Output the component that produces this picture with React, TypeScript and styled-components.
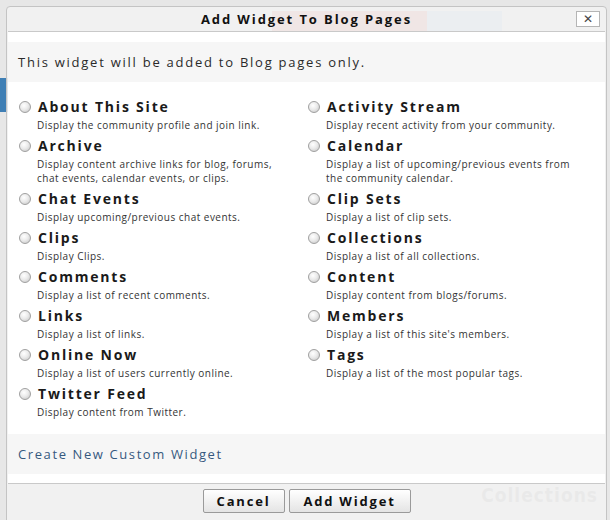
import React from "react";
import styled, { createGlobalStyle } from "styled-components";

const Global = createGlobalStyle`
  html, body { margin: 0; padding: 0; }
  body { width: 610px; height: 520px; overflow: hidden; font-family: "Open Sans", "DejaVu Sans", sans-serif; }
`;

const Page = styled.div`
  position: relative;
  width: 610px;
  height: 520px;
  background: #e7e7e7;
  overflow: hidden;
  display: flex;
  flex-direction: column;
`;

const PageTop = styled.div`
  display: flex;
  height: 20px;
  margin-top: 11px;
  padding-left: 272px;
`;

const PageBadge = styled.div<{ $bg: string; $w: number }>`
  width: ${(p) => p.$w}px;
  background: ${(p) => p.$bg};
`;

const PageSide = styled.div`
  width: 8px;
  height: 34px;
  margin-top: 47px;
  background: #3f7fb5;
`;

const PageFill = styled.div`
  flex: 1;
`;

const PageHeading = styled.div`
  align-self: flex-end;
  margin-right: 12px;
  margin-bottom: 14px;
  font-family: "DejaVu Sans Condensed", "DejaVu Sans", sans-serif;
  font-weight: 700;
  font-size: 19px;
  letter-spacing: 1px;
  color: #9a9a9a;
`;

const Modal = styled.div`
  position: absolute;
  left: 6px;
  top: 6px;
  width: 601px;
  height: 530px;
  box-sizing: border-box;
  border: 1px solid #c4c4c4;
  border-radius: 4px 4px 0 0;
  background: rgba(242, 242, 242, 0.9);
  display: flex;
  flex-direction: column;
  padding: 0 1px;
`;

const Header = styled.div`
  height: 24px;
  display: flex;
  align-items: center;
  justify-content: center;
  position: relative;
  border-bottom: 1px solid #c9c9c9;
`;

const Title = styled.div`
  font-family: "Open Sans", sans-serif;
  font-weight: 700;
  font-size: 13px;
  letter-spacing: 1.9px;
  color: #111;
`;

const CloseButton = styled.button`
  position: absolute;
  right: 5px;
  top: 4px;
  width: 24px;
  height: 16px;
  border: 1px solid #b5b5b5;
  background: #fff;
  padding: 0;
  display: flex;
  align-items: center;
  justify-content: center;
  color: #444;
  font-size: 12px;
  font-family: "DejaVu Sans", sans-serif;
  font-weight: 700;
  line-height: 1;
`;

const Body = styled.div`
  background: #fff;
  display: flex;
  flex-direction: column;
  padding-bottom: 9px;
  border-bottom: 1px solid #c9c9c9;
`;

const Intro = styled.div`
  margin-top: 10px;
  height: 40px;
  background: #f6f6f6;
  display: flex;
  align-items: center;
  padding-left: 10px;
  font-size: 13px;
  letter-spacing: 1.75px;
  color: #2a2a2a;
`;

const List = styled.div`
  display: grid;
  grid-template-columns: 289px 1fr;
  row-gap: 5px;
  padding: 16px 0 15px 11px;
`;

const Item = styled.label`
  display: grid;
  grid-template-columns: 19px 1fr;
  align-items: start;
`;

const Radio = styled.span`
  width: 12px;
  height: 12px;
  margin-top: 3px;
  border-radius: 50%;
  box-sizing: border-box;
  border: 1px solid #a0a0a0;
  background: radial-gradient(circle at 40% 35%, #ffffff 0%, #ebebeb 45%, #c2c2c2 100%);
`;

const ItemTitle = styled.div`
  font-weight: 700;
  font-size: 14px;
  line-height: 18px;
  letter-spacing: 1.8px;
  color: #1a1a1a;
`;

const ItemDesc = styled.div<{ $w: number }>`
  margin-top: 2px;
  max-width: ${(p) => p.$w}px;
  font-size: 10px;
  line-height: 14px;
  letter-spacing: 0.48px;
  color: #333;
  margin-left: -1px;
`;

const CreateBar = styled.div`
  height: 40px;
  background: #f6f6f6;
  display: flex;
  align-items: center;
  padding-left: 10px;
`;

const CreateLink = styled.a`
  font-size: 13px;
  letter-spacing: 1.6px;
  color: #36597f;
  text-decoration: none;
`;

const Footer = styled.div`
  display: flex;
  justify-content: center;
  gap: 4px;
  padding-top: 5px;
`;

const Button = styled.button<{ $w: number }>`
  width: ${(p) => p.$w}px;
  height: 24px;
  border: 1px solid #9a9a9a;
  border-radius: 2px;
  background: linear-gradient(#ffffff, #e4e4e4);
  font-family: "Open Sans", sans-serif;
  font-weight: 700;
  font-size: 13px;
  letter-spacing: 1.8px;
  color: #111;
  padding: 0;
`;

const left = [
  ["About This Site", "Display the community profile and join link."],
  ["Archive", "Display content archive links for blog, forums, chat events, calendar events, or clips."],
  ["Chat Events", "Display upcoming/previous chat events."],
  ["Clips", "Display Clips."],
  ["Comments", "Display a list of recent comments."],
  ["Links", "Display a list of links."],
  ["Online Now", "Display a list of users currently online."],
  ["Twitter Feed", "Display content from Twitter."],
];

const right = [
  ["Activity Stream", "Display recent activity from your community."],
  ["Calendar", "Display a list of upcoming/previous events from the community calendar."],
  ["Clip Sets", "Display a list of clip sets."],
  ["Collections", "Display a list of all collections."],
  ["Content", "Display content from blogs/forums."],
  ["Members", "Display a list of this site's members."],
  ["Tags", "Display a list of the most popular tags."],
];

function Widget({ title, desc }: { title: string; desc: string }) {
  return (
    <Item>
      <Radio />
      <div>
        <ItemTitle>{title}</ItemTitle>
        <ItemDesc $w={250}>{desc}</ItemDesc>
      </div>
    </Item>
  );
}

export default function App() {
  const rows: React.ReactNode[] = [];
  for (let i = 0; i < left.length; i++) {
    rows.push(<Widget key={"l" + i} title={left[i][0]} desc={left[i][1]} />);
    if (right[i]) rows.push(<Widget key={"r" + i} title={right[i][0]} desc={right[i][1]} />);
  }
  return (
    <>
      <Global />
      <Page>
        <PageTop>
          <PageBadge $bg="#e07a6e" $w={155} />
          <PageBadge $bg="#a9c8e4" $w={75} />
        </PageTop>
        <PageSide />
        <PageFill />
        <PageHeading>Collections</PageHeading>
        <Modal>
          <Header>
            <Title>Add Widget To Blog Pages</Title>
            <CloseButton aria-label="close">✕</CloseButton>
          </Header>
          <Body>
            <Intro>This widget will be added to Blog pages only.</Intro>
            <List>{rows}</List>
            <CreateBar>
              <CreateLink href="#">Create New Custom Widget</CreateLink>
            </CreateBar>
          </Body>
          <Footer>
            <Button $w={82}>Cancel</Button>
            <Button $w={122}>Add Widget</Button>
          </Footer>
        </Modal>
      </Page>
    </>
  );
}
